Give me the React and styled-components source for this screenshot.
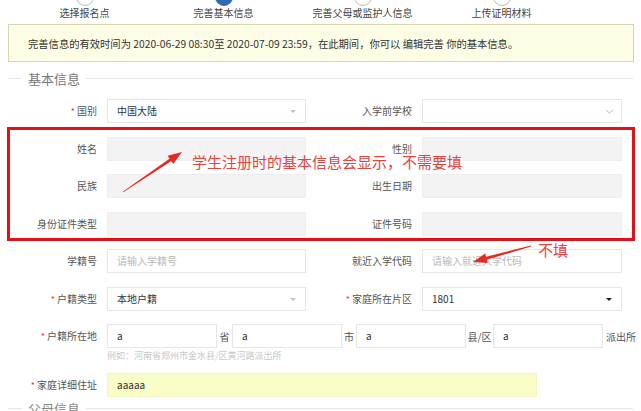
import React from "react"
import styled, { createGlobalStyle } from "styled-components"

const GlobalStyle = createGlobalStyle`
  html, body {
    margin: 0;
    padding: 0;
    background: #fff;
    overflow: hidden;
  }
  body {
    font-family: "Noto Sans CJK SC", "Noto Sans", sans-serif;
    color: #555;
  }
`

const steps = ["选择报名点", "完善基本信息", "完善父母或监护人信息", "上传证明材料"]

const Page = styled.div`
  position: relative;
  width: 641px;
  height: 411px;
  overflow: hidden;
`

const Steps = styled.div`
  display: flex;
  padding-left: 15px;
  height: 22px;
  overflow: hidden;
`

const Step = styled.div`
  width: 139px;
  display: flex;
  flex-direction: column;
  align-items: center;
`

const Circle = styled.div`
  width: 18px;
  height: 18px;
  margin-top: -12px;
  box-sizing: border-box;
  border-radius: 50%;
  border: 1px solid ${p => (p.$active ? "#2d6cb3" : "#b9b9b9")};
  background: ${p => (p.$active ? "#2d6cb3" : "#fff")};
`

const StepLabel = styled.div`
  font-size: 10px;
  line-height: 14px;
  color: #444;
`

const Notice = styled.div`
  margin: 2px 7px 0 8px;
  height: 38px;
  box-sizing: border-box;
  border: 1px solid #d8d5ae;
  background: #fdfde6;
  display: flex;
  align-items: center;
  padding-left: 19px;
  font-size: 10.3px;
  color: #333;
`

const Legend = styled.div`
  display: flex;
  align-items: center;
  gap: 6px;
  margin: 8px 8px 0 8px;
  height: 16px;
  font-size: 13px;
  color: #777;
  &::before {
    content: "";
    width: 14px;
    height: 1px;
    background: #e6e6e6;
  }
  &::after {
    content: "";
    flex: 1;
    height: 1px;
    background: #e6e6e6;
  }
`

const Form = styled.div`
  margin-top: 13px;
  display: flex;
  flex-direction: column;
  gap: 13.5px;
`

const Row = styled.div`
  display: grid;
  grid-template-columns: 97px 199px 96px 200px;
  column-gap: 10px;
  align-items: start;
`

const Label = styled.div`
  height: 24px;
  line-height: 24px;
  text-align: right;
  font-size: 10px;
  color: #555;
  white-space: nowrap;
`

const Star = styled.span`
  color: #e33;
  margin-right: 2px;
  font-size: 9px;
`

const Input = styled.div`
  position: relative;
  flex: none;
  height: 24px;
  box-sizing: border-box;
  border: 1px solid ${p => (p.$disabled ? "#eeeeee" : p.$highlight ? "#f4f6c0" : "#e6e6e6")};
  background: ${p => (p.$disabled ? "#f3f3f3" : p.$highlight ? "#fbfdc7" : "#fff")};
  padding: 0 9px;
  line-height: 22px;
  font-size: 10px;
  color: ${p => (p.$placeholder ? "#b8b8b8" : "#333")};
  width: ${p => p.$width || "auto"};
`

const Caret = styled.span`
  position: absolute;
  right: 9px;
  top: 10px;
  width: 0;
  height: 0;
  border-left: 3px solid transparent;
  border-right: 3px solid transparent;
  border-top: 3px solid ${p => (p.$dark ? "#222" : "#c4c4c4")};
`

const Chevron = styled.svg`
  position: absolute;
  right: 7px;
  top: 8px;
`

const Wide = styled.div`
  grid-column: 2 / -1;
  margin-bottom: ${p => p.$pull || 0}px;
`

const AddressLine = styled.div`
  display: flex;
  align-items: center;
`

const Unit = styled.span`
  flex: none;
  width: ${p => p.$w}px;
  padding-left: ${p => p.$pad || 0}px;
  box-sizing: border-box;
  text-align: ${p => (p.$pad ? "left" : "center")};
  font-size: 10px;
  color: #555;
  white-space: nowrap;
`

const Hint = styled.div`
  margin-top: 2px;
  font-size: 9px;
  line-height: 12px;
  color: #c8c8c8;
`

const NextLegend = styled(Legend)`
  margin-top: 4px;
  color: #888;
`

const RedBox = styled.div`
  position: absolute;
  left: 7px;
  top: 127px;
  width: 628px;
  height: 114px;
  box-sizing: border-box;
  border: 3px solid #e50f14;
  pointer-events: none;
`

const Note = styled.div`
  position: absolute;
  left: ${p => p.$x}px;
  top: ${p => p.$y}px;
  font-size: ${p => p.$size || 15}px;
  line-height: 20px;
  color: #e3443d;
  white-space: nowrap;
`

const Arrows = styled.svg`
  position: absolute;
  left: 0;
  top: 0;
  pointer-events: none;
`

function Arrow({ x1, y1, x2, y2 }) {
  const dx = x2 - x1
  const dy = y2 - y1
  const len = Math.hypot(dx, dy)
  const ux = dx / len
  const uy = dy / len
  const nx = -uy
  const ny = ux
  const head = 12
  const bx = x2 - ux * head
  const by = y2 - uy * head
  const shaft = [
    [x1 + nx * 0.4, y1 + ny * 0.4],
    [bx + nx * 1.6, by + ny * 1.6],
    [bx - nx * 1.6, by - ny * 1.6],
    [x1 - nx * 0.4, y1 - ny * 0.4],
  ]
  const tip = [
    [x2, y2],
    [bx + nx * 5 - ux * 2, by + ny * 5 - uy * 2],
    [bx - nx * 5 - ux * 2, by - ny * 5 - uy * 2],
  ]
  const pts = a => a.map(p => p.join(",")).join(" ")
  return (
    <g fill="#e62a22">
      <polygon points={pts(shaft)} />
      <polygon points={pts(tip)} />
    </g>
  )
}

const Select = ({ value, dark }) => (
  <Input>
    {value}
    <Caret $dark={dark} />
  </Input>
)

export default function App() {
  return (
    <Page>
      <GlobalStyle />
      <Steps>
        {steps.map((s, i) => (
          <Step key={s}>
            <Circle $active={i === 1} />
            <StepLabel>{s}</StepLabel>
          </Step>
        ))}
      </Steps>
      <Notice>
        完善信息的有效时间为 2020-06-29 08:30至 2020-07-09 23:59，在此期间，你可以 编辑完善 你的基本信息。
      </Notice>
      <Legend>基本信息</Legend>
      <Form>
        <Row>
          <Label><Star>*</Star>国别</Label>
          <Select value="中国大陆" />
          <Label>入学前学校</Label>
          <Input>
            <Chevron width="9" height="7" viewBox="0 0 9 7">
              <path d="M1 2l3.5 3L8 2" fill="none" stroke="#a9b9cc" strokeWidth="1" />
            </Chevron>
          </Input>
        </Row>
        <Row>
          <Label>姓名</Label>
          <Input $disabled />
          <Label>性别</Label>
          <Input $disabled />
        </Row>
        <Row>
          <Label>民族</Label>
          <Input $disabled />
          <Label>出生日期</Label>
          <Input $disabled />
        </Row>
        <Row>
          <Label>身份证件类型</Label>
          <Input $disabled />
          <Label>证件号码</Label>
          <Input $disabled />
        </Row>
        <Row>
          <Label>学籍号</Label>
          <Input $placeholder>请输入学籍号</Input>
          <Label>就近入学代码</Label>
          <Input $placeholder>请输入就近入学代码</Input>
        </Row>
        <Row>
          <Label><Star>*</Star>户籍类型</Label>
          <Select value="本地户籍" />
          <Label><Star>*</Star>家庭所在片区</Label>
          <Select value="1801" dark />
        </Row>
        <Row>
          <Label><Star>*</Star>户籍所在地</Label>
          <Wide $pull={-3}>
            <AddressLine>
              <Input $width="110px">a</Input>
              <Unit $w={15}>省</Unit>
              <Input $width="110px">a</Input>
              <Unit $w={14}>市</Unit>
              <Input $width="110px">a</Input>
              <Unit $w={27}>县/区</Unit>
              <Input $width="110px">a</Input>
              <Unit $w={36} $pad={3}>派出所</Unit>
            </AddressLine>
            <Hint>例如：河南省郑州市金水县/区黄河路派出所</Hint>
          </Wide>
        </Row>
        <Row>
          <Label><Star>*</Star>家庭详细住址</Label>
          <Wide>
            <Input $highlight $width="430px">aaaaa</Input>
          </Wide>
        </Row>
      </Form>
      <NextLegend>父母信息</NextLegend>

      <RedBox />
      <Note $x={192} $y={152}>学生注册时的基本信息会显示，不需要填</Note>
      <Note $x={538} $y={240}>不填</Note>
      <Arrows width="641" height="411" viewBox="0 0 641 411">
        <Arrow x1={123} y1={192} x2={182} y2={152} />
        <Arrow x1={531} y1={246} x2={473} y2={262} />
      </Arrows>
    </Page>
  )
}
